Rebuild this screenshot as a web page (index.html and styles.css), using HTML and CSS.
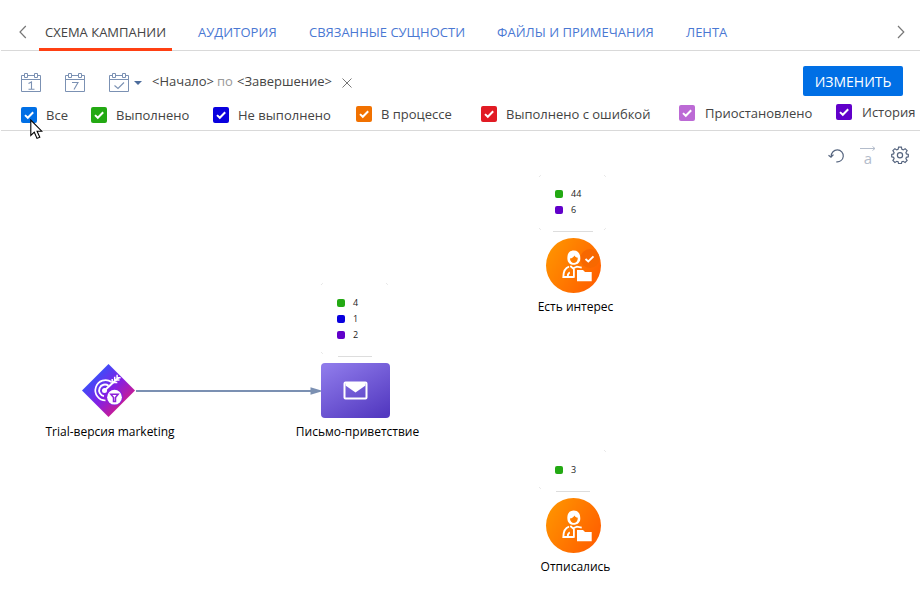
FILE: index.html
```html
<!DOCTYPE html>
<html lang="ru">
<head>
<meta charset="utf-8">
<title>Схема кампании</title>
<link rel="stylesheet" href="styles.css">
</head>
<body>
<svg width="0" height="0" class="defs">
  <defs>
    <linearGradient id="orange" x1="0" y1="0.2" x2="1" y2="0.8"><stop offset="0" stop-color="#ff9400"/><stop offset="1" stop-color="#ff5d00"/></linearGradient>
    <linearGradient id="violet" x1="0.15" y1="0" x2="0.85" y2="1"><stop offset="0" stop-color="#8e7aea"/><stop offset="1" stop-color="#5339c0"/></linearGradient>
    <linearGradient id="rainbow" x1="0.2" y1="0.2" x2="0.8" y2="0.8"><stop offset="0" stop-color="#3552fb"/><stop offset="0.52" stop-color="#8320e5"/><stop offset="1" stop-color="#ce1b8c"/></linearGradient>
    <symbol id="tick" viewBox="0 0 16 16"><path d="M4 8.100 6.800 10.800 12.200 5.300" fill="none" stroke="#fff" stroke-width="2"/></symbol>
    <symbol id="calendar" viewBox="0 0 20 20"><path d="M3 2.500H.5v16h19v-16H17M7 2.500h6M.5 6.500h19M3.500.5h3v4h-3zM13.500.5h3v4h-3z" fill="none" stroke="#7b91b3"/></symbol>
    <symbol id="person" viewBox="0 0 34 34">
      <path d="M13.300 1C8.500 1 6.600 4.500 6.900 9.500c.2 3.500 2.600 5.800 6.300 5.800s6.500-2.100 6.600-6C20 4 17.500 1 13.300 1z" fill="#fff"/>
      <path d="M9.400 9c2.200-.3 3.700-1.300 4.400-3 .7 1.300 1.900 2 3.500 2.300.1 3.100-1.400 5.200-3.800 5.200-2.300 0-3.900-1.800-4.100-4.500z" fill="#ff7d00"/>
      <path d="M8.500 17.200C4.500 18.500 2.900 21.500 2.800 27.500h10.500M7.200 27.300c.1-2.400.8-3.800 2-4.600M13.400 28.200v-8.500l-3.600-3.200M12 19l4.500-1.900 4.700 1" fill="none" stroke="#fff" stroke-width="1.800"/>
      <path d="M16.500 31.700V20.500h6l2 2.100h6.700v9.100z" fill="#fff"/>
    </symbol>
  </defs>
</svg>

<nav class="tabs">
  <button class="scroll"><svg width="8" height="14" viewBox="0 0 8 14"><path d="M6.800 1 1 7l5.800 6" /></svg></button>
  <div class="tab active">СХЕМА КАМПАНИИ</div>
  <div class="tab t2">АУДИТОРИЯ</div>
  <div class="tab t3">СВЯЗАННЫЕ СУЩНОСТИ</div>
  <div class="tab t4">ФАЙЛЫ И ПРИМЕЧАНИЯ</div>
  <div class="tab t5">ЛЕНТА</div>
  <button class="scroll next"><svg width="8" height="14" viewBox="0 0 8 14"><path d="M1 1 6.800 7 1 13" /></svg></button>
</nav>

<section class="toolbar">
  <div class="period">
    <svg class="cal" width="20" height="20"><use href="#calendar"/><path d="M7.500 10.500 10.500 9v7M7.500 16.200h6"/></svg>
    <svg class="cal" width="20" height="20"><use href="#calendar"/><path d="M7 9.500h6L9 16.500"/></svg>
    <svg class="cal last" width="20" height="20"><use href="#calendar"/><path d="M5.500 12.500 9 15.500 15 9.500"/></svg>
    <svg class="caret" width="8" height="4" viewBox="0 0 8 4"><path d="M0 0h8L4 4z"/></svg>
    <span class="date start">&lt;Начало&gt;</span><span class="date by">по</span><span class="date end">&lt;Завершение&gt;</span>
    <svg class="clear" width="10" height="10" viewBox="0 0 10 10"><path d="M.5.5l9 9M9.500.5l-9 9"/></svg>
  </div>
  <button class="edit">ИЗМЕНИТЬ</button>
</section>

<section class="filters">
  <label class="filter f1"><svg class="box"><use href="#tick"/></svg><span>Все</span></label>
  <label class="filter f2"><svg class="box"><use href="#tick"/></svg><span>Выполнено</span></label>
  <label class="filter f3"><svg class="box"><use href="#tick"/></svg><span>Не выполнено</span></label>
  <label class="filter f4"><svg class="box"><use href="#tick"/></svg><span>В процессе</span></label>
  <label class="filter f5"><svg class="box"><use href="#tick"/></svg><span>Выполнено с ошибкой</span></label>
  <label class="filter f6"><svg class="box"><use href="#tick"/></svg><span>Приостановлено</span></label>
  <label class="filter f7"><svg class="box"><use href="#tick"/></svg><span>История</span></label>
</section>

<main class="canvas">
  <div class="tools">
    <svg width="18" height="18" viewBox="0 0 18 18"><path d="M4.300 10.200a6 6 0 1 1 5 5.600M1.500 9.200l2.500 2 2.500-2.500" fill="none" stroke="#56657f" stroke-width="1.200"/></svg>
    <div class="arrow-a"><svg width="16" height="5" viewBox="0 0 16 5"><path d="M0 2.500h15M12.500.5l2.500 2-2.500 2" fill="none" stroke="#b3bccb"/></svg><span>a</span></div>
    <svg width="18" height="18" viewBox="0 0 18 18"><path d="M7.600 1.200h2.800l.5 2.200 1.300.5 1.900-1.200 2 2-1.200 1.900.5 1.300 1.900.5v2.400l-1.900.5-.5 1.300 1.200 1.900-2 2-1.900-1.200-1.300.5-.5 1.900H7.600l-.5-1.900-1.300-.5-1.900 1.200-2-2 1.200-1.900-.5-1.300-1.900-.5V8.400l1.900-.5.5-1.300-1.200-1.900 2-2 1.900 1.200 1.300-.5z" fill="none" stroke="#56657f" stroke-width="1.200"/><circle cx="9" cy="9.300" r="2.600" fill="none" stroke="#56657f" stroke-width="1.200"/></svg>
  </div>

  <svg class="link" width="188" height="10" viewBox="0 0 188 10"><path d="M1 5h178" stroke="#7b90b2" stroke-width="2"/><path d="M175.500 1.200 188 5l-12.500 3.800z" fill="#7b90b2"/></svg>

  <div class="node trial">
    <svg width="54" height="54" viewBox="0 0 54 54">
      <path d="M27 .5 53.500 27 27 53.500.5 27z" fill="url(#rainbow)"/>
      <g fill="none" stroke="#fff">
        <path d="M30 18.500A10.200 10.200 0 1 0 24 37" stroke-width="1.700"/>
        <path d="M27 22.300A5.800 5.800 0 1 0 22.500 32.600" stroke-width="1.900"/>
        <path d="M22.500 27.500 37 14" stroke-width="2"/>
        <path d="M30.700 19.500V15.500M31 19h4.800M33.200 17V13.300M33.500 16.600h4.500M35.600 14.500v-3.300M35.800 14.300h3.300" stroke-width="1.500"/>
      </g>
      <circle cx="23" cy="27" r="2.500" fill="#fff"/>
      <circle cx="33" cy="33.700" r="8.300" fill="#8320e5"/><circle cx="33" cy="33.700" r="7.400" fill="#fff"/>
      <path d="M29.400 30.800h7.200L34 33.900v4h-2v-4z" fill="#fff" stroke="#8c20da" stroke-width="1.500"/>
    </svg>
    <span>Trial-версия marketing</span>
  </div>

  <div class="node letter">
    <svg width="69" height="55" viewBox="0 0 69 55"><rect width="69" height="55" rx="4" fill="url(#violet)"/><rect x="23.500" y="19.500" width="22" height="16" rx="1" fill="none" stroke="#fff" stroke-width="2"/><path d="M24.500 20h20v2.500L34.500 29.500 24.500 22.500z" fill="#fff"/></svg>
    <span>Письмо-приветствие</span>
  </div>

  <div class="node interest">
    <svg width="56" height="56" viewBox="0 0 56 56"><circle cx="28" cy="28" r="27.500" fill="url(#orange)"/><circle cx="44.500" cy="21" r="9.500" fill="#f76800"/><use href="#person" x="15" y="12" width="34" height="34"/><path d="M40 21.500 42.800 24 48 18.800" fill="none" stroke="#fff" stroke-width="1.900"/></svg>
    <span>Есть интерес</span>
  </div>

  <div class="node unsubscribed">
    <svg width="56" height="56" viewBox="0 0 56 56"><circle cx="28" cy="28" r="27.500" fill="url(#orange)"/><use href="#person" x="15" y="12" width="34" height="34"/></svg>
    <span>Отписались</span>
  </div>

  <div class="stats s-letter">
    <svg class="frame" width="70" height="76"><path d="M1 4l2-2M66 2l2 2M1 71l2 2"/><path class="foot" d="M18 75.500h34"/></svg>
    <p class="green">4</p><p class="blue">1</p><p class="purple">2</p>
  </div>
  <div class="stats s-interest">
    <svg class="frame" width="70" height="60"><path d="M1 4l2-2M66 2l2 2M1 55l2 2M66 57l2-2"/><path class="foot" d="M15 58.500h40"/></svg>
    <p class="green">44</p><p class="purple">6</p>
  </div>
  <div class="stats s-unsub">
    <svg class="frame" width="70" height="44"><path d="M66 1l2 2M1 38l2 2"/><path class="foot" d="M18 42.500h34"/></svg>
    <p class="green">3</p>
  </div>
</main>

<svg class="cursor" width="13" height="21" viewBox="0 0 13 21"><path d="M.8 1v15.500l3.500-3.300 2.700 6.200 2.800-1.200-2.700-6h4.700z" fill="#fff" stroke="#000" stroke-width="1.100"/></svg>
</body>
</html>
```

FILE: styles.css
```css
* { box-sizing: border-box; }
body { margin: 0; width: 920px; height: 610px; overflow: hidden; background: #fff; color: #444; font: 13px/18px "Open Sans", sans-serif; position: relative; }
button { border: 0; background: none; padding: 0; font: inherit; }
.defs { position: absolute; }
svg { display: block; flex: none; }

.tabs { display: flex; height: 51px; margin-left: 1px; padding-top: 15px; border-bottom: 1px solid #d9d9d9; }
.scroll { width: 38px; padding: 0 0 0 18px; height: 34px; }
.scroll path { fill: none; stroke: #777; stroke-width: 1.200; }
.scroll.next { width: 23px; padding-left: 0; margin-left: auto; }
.tab { height: 36px; padding: 8px 0 0 6px; margin-right: 20px; color: #4a78d3; white-space: nowrap; }
.tab.active { width: 133px; color: #444; border-bottom: 3px solid #ff4013; }
.t2 { width: 91px; letter-spacing: 0.050px; }
.t3 { width: 168px; }
.t4 { width: 169px; letter-spacing: 0.030px; }
.t5 { width: 53px; }

.toolbar { display: flex; justify-content: space-between; height: 50px; padding: 15px 17px 0 21px; }
.period { display: flex; padding-top: 7px; }
.cal { margin-right: 24px; }
.cal > path { fill: none; stroke: #7b91b3; stroke-width: 1.100; }
.cal.last { margin-right: 5px; }
.caret { margin: 8px 10px 0 0; fill: #4c6c9c; }
.date { white-space: nowrap; line-height: 16px; }
.start { width: 65px; }
.by { width: 20px; color: #999; }
.end { width: 105px; }
.clear { margin-top: 5px; }
.clear path { stroke: #777; }
.edit { width: 100px; height: 30px; padding-top: 2px; border-radius: 2px; background: #006fe5; color: #fff; font-size: 14px; }

.filters { display: flex; height: 30px; margin-left: 1px; padding-left: 20px; border-bottom: 1px solid #d9d9d9; }
.filter { display: flex; gap: 9px; padding-top: 6px; white-space: nowrap; line-height: 16px; }
.box { width: 16px; height: 16px; border-radius: 2px; }
.f1 { width: 70px; } .f1 .box { background: #006fe5; }
.f2 { width: 122px; } .f2 .box { background: #23a913; }
.f3 { width: 143px; letter-spacing: 0.030px; } .f3 .box { background: #0900de; }
.f4 { width: 125px; padding-top: 5px; } .f4 .box { background: #f17100; }
.f5 { width: 198px; padding-top: 5px; } .f5 .box { background: #e11b24; }
.f6 { width: 157px; padding-top: 4px; gap: 10px; } .f6 .box { background: #bc6ad5; }
.f7 { width: 84px; padding-top: 3px; gap: 10px; } .f7 .box { background: #6100ca; }

.canvas { position: relative; height: 479px; color: #000; font-size: 12px; }
.tools { display: flex; justify-content: flex-end; gap: 15px; padding: 15px 11px 0 0; }
.arrow-a { width: 16px; height: 19px; color: #b3bccb; text-align: center; }
.arrow-a span { display: block; font-size: 15px; line-height: 14px; }
.link { position: absolute; left: 135px; top: 255px; }
.node { position: absolute; display: flex; flex-direction: column; align-items: center; width: 150px; }
.node span { white-space: nowrap; margin-top: 5px; }
.trial { left: 33px; top: 233px; }
.trial svg { transform: translate(0.500px, -0.500px); }
.trial span { margin-left: 4px; }
.letter { left: 281px; top: 232px; }
.letter svg { margin-right: 1px; }
.letter span { margin-left: 3px; }
.interest { left: 499px; top: 106px; }
.unsubscribed { left: 499px; top: 366px; }
.interest svg, .unsubscribed svg { transform: translate(-0.500px, 0.500px); }
.interest span, .unsubscribed span { margin-left: 3px; }
.stats { position: absolute; width: 70px; padding: 14px 0 0 17px; }
.s-letter { left: 320px; top: 150px; }
.s-interest { left: 538px; top: 42px; padding-top: 13px; }
.s-unsub { left: 538px; top: 318px; padding-top: 13px; }
.stats p { display: flex; align-items: center; gap: 8px; margin: 0; height: 16px; color: #222; font-size: 9px; }
.stats p::before { content: ""; width: 8px; height: 8px; border-radius: 2px; background: #23a913; }
.stats .blue::before { background: #0900de; }
.stats .purple::before { background: #6100ca; }
.frame { position: absolute; left: 0; top: 0; fill: none; stroke: #ddd; stroke-dasharray: 1 1; }
.foot { stroke: #ddd; stroke-dasharray: none; }
.cursor { position: absolute; left: 30px; top: 119px; }
```
